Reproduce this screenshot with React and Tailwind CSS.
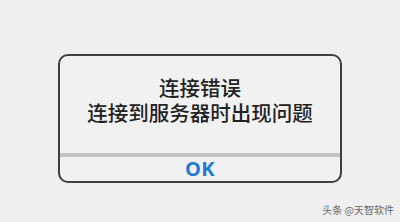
export default function App() {
  return (
    <div
      className="relative w-[400px] h-[222px] bg-[#efefef] flex items-start justify-center pt-[54px]"
      style={{ fontFamily: '"Noto Sans CJK SC", "Noto Sans", sans-serif' }}
    >
      <div className="w-[284px] h-[129px] border-2 border-[#3f3f3f] rounded-[10px] bg-[#f1f1f1] flex flex-col overflow-hidden">
        <div className="h-[97px] flex flex-col items-center gap-[1px] pt-[19px] text-[20.5px] leading-[24px] font-medium text-[#222]">
          <p>连接错误</p>
          <p>连接到服务器时出现问题</p>
        </div>
        <div className="h-[4px] bg-[#c3c3c3]" />
        <div className="flex-1 flex items-center justify-center">
          <span className="text-[20px] leading-none font-bold text-[#1f7bd2] tracking-wide" style={{ fontFamily: '"Open Sans", sans-serif' }}>
            OK
          </span>
        </div>
      </div>
      <span className="absolute right-[6px] bottom-[7px] text-[10px] leading-none text-[#6a6a6a]">
        头条 @天智软件
      </span>
    </div>
  );
}
